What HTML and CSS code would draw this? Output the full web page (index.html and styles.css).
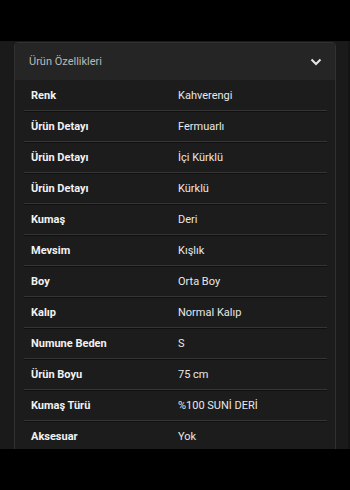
FILE: index.html
```html
<!DOCTYPE html>
<html lang="tr">
<head>
<meta charset="utf-8">
<link rel="stylesheet" href="styles.css">
</head>
<body>
<div class="top"></div>
<div class="page">
  <section class="card">
    <header class="card-head">
      <span class="title">Ürün Özellikleri</span>
      <svg class="chev" width="12" height="8" viewBox="0 0 12 8"><path d="M1.5 1.5 L6 6 L10.5 1.5" fill="none" stroke="#e6e6e6" stroke-width="2"/></svg>
    </header>
    <div class="rows">
      <div class="row"><span class="k">Renk</span><span class="v">Kahverengi</span></div>
      <div class="row"><span class="k">Ürün Detayı</span><span class="v">Fermuarlı</span></div>
      <div class="row"><span class="k">Ürün Detayı</span><span class="v">İçi Kürklü</span></div>
      <div class="row"><span class="k">Ürün Detayı</span><span class="v">Kürklü</span></div>
      <div class="row"><span class="k">Kumaş</span><span class="v">Deri</span></div>
      <div class="row"><span class="k">Mevsim</span><span class="v">Kışlık</span></div>
      <div class="row"><span class="k">Boy</span><span class="v">Orta Boy</span></div>
      <div class="row"><span class="k">Kalıp</span><span class="v">Normal Kalıp</span></div>
      <div class="row"><span class="k">Numune Beden</span><span class="v">S</span></div>
      <div class="row"><span class="k">Ürün Boyu</span><span class="v">75 cm</span></div>
      <div class="row"><span class="k">Kumaş Türü</span><span class="v">%100 SUNİ DERİ</span></div>
      <div class="row"><span class="k">Aksesuar</span><span class="v">Yok</span></div>
    </div>
  </section>
</div>
</body>
</html>
```
FILE: styles.css
```css
html, body {
  margin: 0;
  padding: 0;
  background: #000;
  font-family: Roboto, "Liberation Sans", sans-serif;
}
.top {
  height: 41px;
  background: #000;
}
.page {
  height: 408px;
  background: #1a1a1a;
  padding: 1px 12px 0 14px;
  box-sizing: border-box;
  overflow: hidden;
  border-right: 2px solid #141414;
}
.card {
  border: 1px solid #313131;
  border-radius: 4px 4px 0 0;
  background: #1c1c1c;
}
.card-head {
  height: 37px;
  background: #252525;
  display: flex;
  align-items: center;
  justify-content: space-between;
  padding: 0 13px 0 14px;
  border-radius: 3px 3px 0 0;
}
.title {
  color: #b9b9b9;
  font-size: 11px;
}
.chev {
  display: block;
}
.rows {
  padding: 0 8px 0 9px;
}
.row {
  height: 31px;
  box-sizing: border-box;
  border-bottom: 1px solid #353535;
  box-shadow: 0 1px 0 #101010 inset;
  display: grid;
  grid-template-columns: 147px 1fr;
  align-items: center;
  padding-left: 7px;
  font-size: 11px;
  color: #f2f2f2;
}
.row:first-child {
  box-shadow: none;
}
.k {
  font-weight: 700;
}
.v {
  color: #e8e8e8;
}
```
